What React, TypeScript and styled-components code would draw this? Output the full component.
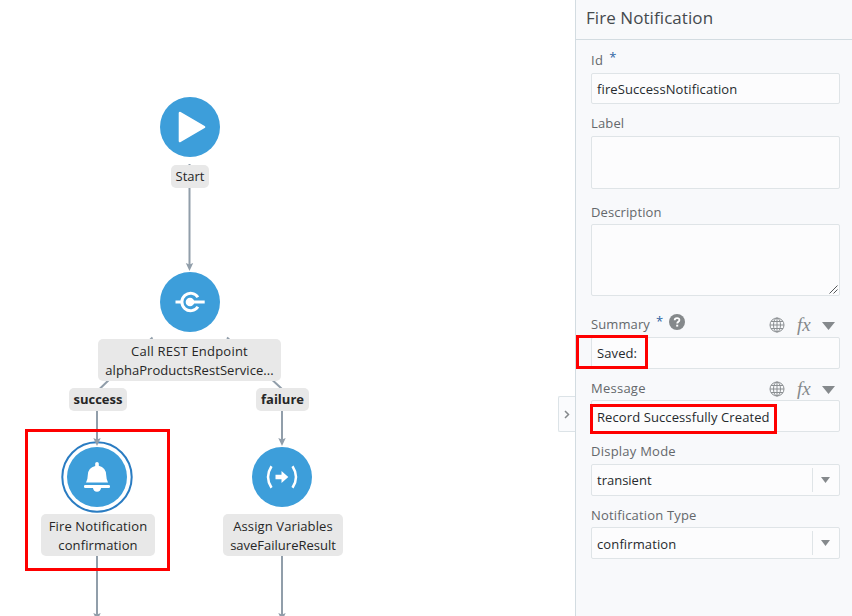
import React from "react";
import styled, { createGlobalStyle } from "styled-components";

const Global = createGlobalStyle`
  * { box-sizing: border-box; }
  body { margin: 0; background: #fff; font-family: "Open Sans", "Noto Sans", sans-serif; font-size: 13px; overflow: hidden; }
`;

const Page = styled.div`
  display: flex;
  width: 852px;
  height: 616px;
  position: relative;
  overflow: hidden;
`;

/* ---------- flow canvas ---------- */

const Canvas = styled.main`
  position: relative;
  flex: 1;
  background: #fff;
`;

const Drawing = styled.svg`
  position: absolute;
  left: 0;
  top: 0;
`;

const NodeLabel = styled.div<{ $x: number; $y: number; $w: number; $bold?: boolean; $tall?: boolean }>`
  position: absolute;
  left: ${(p) => p.$x}px;
  top: ${(p) => p.$y}px;
  width: ${(p) => p.$w}px;
  padding: ${(p) => (p.$tall ? "3px 0 1px" : "2px 0")};
  border-radius: 5px;
  background: #e8e8e8;
  color: #262626;
  line-height: 19px;
  text-align: center;
  white-space: nowrap;
  font-weight: ${(p) => (p.$bold ? 700 : 400)};
`;

const Text = styled.span<{ $track?: number }>`
  display: block;
  letter-spacing: ${(p) => p.$track ?? 0}px;
`;

const Highlight = styled.div<{ $x: number; $y: number; $w: number; $h: number }>`
  position: absolute;
  left: ${(p) => p.$x}px;
  top: ${(p) => p.$y}px;
  width: ${(p) => p.$w}px;
  height: ${(p) => p.$h}px;
  border: 3px solid #fe0000;
  pointer-events: none;
`;

const Toggle = styled.button`
  position: absolute;
  right: 0;
  top: 396px;
  width: 17px;
  height: 36px;
  padding: 0;
  display: flex;
  align-items: center;
  justify-content: center;
  border: 1px solid #dce3e7;
  border-right: 0;
  border-radius: 2px 0 0 2px;
  background: #fafbfd;
`;

/* ---------- property panel ---------- */

const Panel = styled.aside`
  width: 277px;
  border-left: 1px solid #d3dce1;
  background: #f8f9fb;
`;

const PanelHeader = styled.header`
  height: 40px;
  padding: 5px 0 0 10px;
  border-bottom: 1px solid #d3dce1;
  color: #454a4e;
  font-size: 17px;
  line-height: 26px;
`;

const Form = styled.div`
  width: 264px;
  padding: 10px 0 0 15px;
`;

const Field = styled.div<{ $gap: number }>`
  margin-top: ${(p) => p.$gap}px;
`;

const LabelRow = styled.div<{ $low?: boolean }>`
  display: flex;
  align-items: center;
  height: ${(p) => (p.$low ? 22 : 20)}px;
  margin-bottom: ${(p) => (p.$low ? 1 : 3)}px;
  color: #64686b;
  line-height: 20px;
`;

const Star = styled.span<{ $gap: number }>`
  align-self: flex-start;
  margin: -3px 0 0 ${(p) => p.$gap}px;
  color: #2f66a3;
`;

const Help = styled.svg`
  margin: -4px 0 0 6px;
`;

const Tools = styled.div`
  display: flex;
  align-items: center;
  height: 20px;
  margin: 2px 5px 0 auto;
`;

const Fx = styled.span`
  width: 16px;
  margin: -1px 9px 0 12px;
  color: #85898c;
  font: italic 19px/20px "Liberation Serif", serif;
`;

const Box = styled.div<{ $h: number; $low?: boolean }>`
  position: relative;
  display: flex;
  align-items: center;
  height: ${(p) => p.$h}px;
  padding: ${(p) => (p.$low ? 2 : 0)}px 0 0 5px;
  border: 1px solid #dfe4e7;
  border-radius: 2px;
  background: #fcfcfd;
  color: #262a2d;
`;

const Grip = styled.svg`
  position: absolute;
  right: 1px;
  bottom: 1px;
`;

const Drop = styled.div<{ $low?: boolean }>`
  display: flex;
  align-items: center;
  justify-content: center;
  width: 27px;
  height: 24px;
  margin: ${(p) => (p.$low ? -2 : 0)}px 0 0 auto;
  padding-right: 2px;
  border-left: 1px solid #dfe4e7;
`;

const Down = ({ w, h }: { w: number; h: number }) => (
  <svg width={w} height={h} viewBox="0 0 10 6" preserveAspectRatio="none">
    <path d="M0 0H10L5 6Z" fill="#85898c" />
  </svg>
);

const DownSlot = styled.span`
  display: flex;
  padding-top: 2px;
`;

const ExpressionTools = () => (
  <Tools>
    <svg width="16" height="16" viewBox="0 0 16 16" fill="none" stroke="#8b8f92" strokeWidth="1">
      <circle cx="8" cy="8" r="7" />
      <ellipse cx="8" cy="8" rx="3.5" ry="7" />
      <path d="M8 1V15M1 8H15M2 4.5H14M2 11.5H14" />
    </svg>
    <Fx>fx</Fx>
    <DownSlot>
      <Down w={13} h={8} />
    </DownSlot>
  </Tools>
);

const Select = ({ value, track, low }: { value: string; track: number; low?: boolean }) => (
  <Box $h={32} $low={low}>
    <Text $track={track}>{value}</Text>
    <Drop $low={low}>
      <Down w={9} h={6} />
    </Drop>
  </Box>
);

const Disc = ({ x, y }: { x: number; y: number }) => <circle cx={x} cy={y} r="30" fill="#3d9eda" />;

const Arrow = ({ x, y }: { x: number; y: number }) => (
  <path d={`M${x - 3.7} ${y - 8}L${x} ${y - 6.5}L${x + 3.7} ${y - 8}L${x} ${y}Z`} fill="#919eaa" />
);

export default function App() {
  return (
    <>
      <Global />
      <Page>
        <Canvas>
          <Drawing width="575" height="616" viewBox="0 0 575 616">
            <g stroke="#919eaa" strokeWidth="2" fill="none">
              <path d="M189.5 164V265M152.500 337.500L97.500 391M227 337.500L282 389M97 408V440M282 408V440M97 514V616M282 514V616" />
            </g>
            <Disc x={190} y={127} />
            <path d="M180 113L204 127L180 141Z" fill="#fff" stroke="#fff" strokeWidth="2.600" strokeLinejoin="round" />

            <Disc x={190} y={302} />
            <g stroke="#fff" fill="none" strokeWidth="3">
              <path d="M197.900 297.300A8.700 8.700 0 1 0 197.900 306.700" />
              <path d="M175.500 302H182M190 302H204.700" strokeLinecap="butt" />
            </g>
            <circle cx="190" cy="302" r="4.300" fill="#fff" />

            <circle cx="97" cy="477" r="34.700" fill="#fff" stroke="#2a7cc2" strokeWidth="2" />
            <Disc x={97} y={477} />
            <path
              d="M95.200 466V463.500Q95.200 462 97 462T98.800 463.500V465.700Q106 467.500 106.200 475Q106.400 480 108 482.500H86Q87.700 480 87.800 475Q88.200 467.500 95.200 466Z"
              fill="#fff"
            />
            <rect x="84" y="485" width="26" height="3" rx="1.300" fill="#fff" />
            <path d="M92.800 487.500H101.200Q100.500 491.700 97 491.700T92.800 487.500Z" fill="#fff" />

            <Disc x={282} y={477} />
            <path d="M271.500 466.200Q264.500 477 271.500 487.800M292.500 466.200Q299.500 477 292.500 487.800" stroke="#fff" strokeWidth="2.500" fill="none" />
            <path d="M275.500 474.800H281.500V471L288.300 477L281.500 483V479.200H275.500Z" fill="#fff" />

            <Arrow x={189.5} y={271} />
            <Arrow x={97} y={446} />
            <Arrow x={282} y={446} />
            <Arrow x={97} y={621} />
            <Arrow x={282} y={621} />
          </Drawing>

          <NodeLabel $x={171} $y={165} $w={38}>
            <Text>Start</Text>
          </NodeLabel>
          <NodeLabel $x={98} $y={339} $w={183} $tall>
            <Text $track={0.21}>Call REST Endpoint</Text>
            <Text $track={0.05}>alphaProductsRestService...</Text>
          </NodeLabel>
          <NodeLabel $x={69} $y={388} $w={58} $bold>
            <Text>success</Text>
          </NodeLabel>
          <NodeLabel $x={256} $y={388} $w={53} $bold>
            <Text>failure</Text>
          </NodeLabel>
          <NodeLabel $x={41} $y={514} $w={114} $tall>
            <Text $track={0.13}>Fire Notification</Text>
            <Text $track={0.12}>confirmation</Text>
          </NodeLabel>
          <NodeLabel $x={223} $y={514} $w={120} $tall>
            <Text $track={0.11}>Assign Variables</Text>
            <Text>saveFailureResult</Text>
          </NodeLabel>
          <Toggle aria-label="Collapse panel">
            <svg width="6" height="9" viewBox="0 0 6 9" fill="none" stroke="#85898c" strokeWidth="1.500">
              <path d="M1 1L4.500 4.500L1 8" />
            </svg>
          </Toggle>
        </Canvas>

        <Panel>
          <PanelHeader>
            <Text $track={0.07}>Fire Notification</Text>
          </PanelHeader>
          <Form>
            <Field $gap={0}>
              <LabelRow>
                <Text $track={0.3}>Id</Text>
                <Star $gap={6}>*</Star>
              </LabelRow>
              <Box $h={31}>
                <Text $track={0.11}>fireSuccessNotification</Text>
              </Box>
            </Field>
            <Field $gap={9}>
              <LabelRow>
                <Text $track={0.15}>Label</Text>
              </LabelRow>
              <Box $h={53} />
            </Field>
            <Field $gap={12}>
              <LabelRow $low>
                <Text $track={0.1}>Description</Text>
              </LabelRow>
              <Box $h={72}>
                <Grip width="9" height="9" viewBox="0 0 9 9" stroke="#55585a" strokeWidth="1">
                  <path d="M0.500 8.500L8.500 0.500M4.500 8.500L8.500 4.500" />
                </Grip>
              </Box>
            </Field>
            <Field $gap={18}>
              <LabelRow>
                <Text $track={0.1}>Summary</Text>
                <Star $gap={6}>*</Star>
                <Help width="16" height="16" viewBox="0 0 16 16">
                  <circle cx="8" cy="8" r="8" fill="#85898b" />
                  <path d="M5.700 6.300Q5.700 4.100 8.100 4.100T10.400 6.100Q10.400 7.200 9.200 7.900Q8.200 8.500 8.200 9.600" fill="none" stroke="#fff" strokeWidth="1.800" />
                  <rect x="7.200" y="10.700" width="2" height="1.900" fill="#fff" />
                </Help>
                <ExpressionTools />
              </LabelRow>
              <Box $h={32}>
                <Text $track={0.1}>Saved:</Text>
              </Box>
            </Field>
            <Field $gap={8}>
              <LabelRow $low>
                <Text $track={0.25}>Message</Text>
                <ExpressionTools />
              </LabelRow>
              <Box $h={32} $low>
                <Text $track={0.1}>Record Successfully Created</Text>
              </Box>
            </Field>
            <Field $gap={9}>
              <LabelRow>
                <Text $track={0.24}>Display Mode</Text>
              </LabelRow>
              <Select value="transient" track={0} />
            </Field>
            <Field $gap={8}>
              <LabelRow $low>
                <Text $track={0.17}>Notification Type</Text>
              </LabelRow>
              <Select value="confirmation" track={0.12} low />
            </Field>
          </Form>
        </Panel>

        <Highlight $x={25} $y={429} $w={145} $h={142} />
        <Highlight $x={576} $y={335} $w={72} $h={34} />
        <Highlight $x={590} $y={404} $w={187} $h={30} />
      </Page>
    </>
  );
}
